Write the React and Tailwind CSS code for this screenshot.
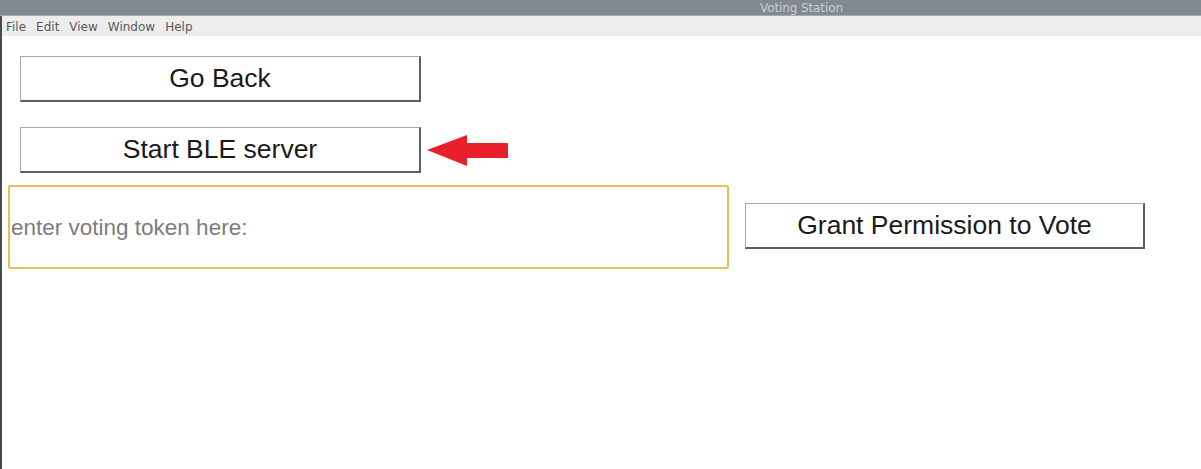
import React from "react";

const Btn = ({ children, className }) => (
    <button
        className={"flex items-center justify-center bg-white text-[26.5px] text-[#1a1a1a] border-t border-l border-b-2 border-r-2 border-t-[#a8a8a8] border-l-[#a8a8a8] border-b-[#5e5e5e] border-r-[#5e5e5e] " + className}
    >
        {children}
    </button>
);

const App = () => {
    return (
        <div className="w-[1201px] h-[469px] bg-white overflow-hidden flex flex-col font-['Liberation_Sans',Arial,sans-serif]">
            {/* title bar */}
            <div className="h-[16px] bg-[#808a90] border-b border-[#a4abb0] flex items-center">
                <span className="pl-[760px] text-[12px] leading-none text-[#c9ced2] font-['DejaVu_Sans',sans-serif] tracking-[-0.1px]">Voting Station</span>
            </div>

            <div className="flex-1 flex flex-col border-l-2 border-[#4a4a4a]">
                {/* menu */}
                <div className="h-[20px] bg-[#ededed] flex items-center gap-[10px] pl-[4px] pt-[1px] text-[12px] text-[#5a5a5a] font-['DejaVu_Sans',sans-serif]">
                    <span>File</span>
                    <span>Edit</span>
                    <span>View</span>
                    <span>Window</span>
                    <span>Help</span>
                </div>

                <div className="flex flex-col">
                    <Btn className="ml-[18px] mt-[20px] w-[401px] h-[46px]">Go Back</Btn>

                    <div className="flex items-center mt-[25px]">
                        <Btn className="ml-[18px] w-[401px] h-[46px]">Start BLE server</Btn>
                        <svg width="84" height="32" viewBox="0 0 84 32" className="ml-[6px] mt-[2px]">
                            <polygon points="0,15 40,0 40,8 81,8 81,23 40,23 40,31" fill="#e8202a" />
                        </svg>
                    </div>

                    <div className="flex items-center mt-[12px]">
                        <div className="ml-[6px] w-[721px] h-[84px] border-2 border-[#e9bd5c] rounded-[2px] flex items-center pl-[1px] pt-[1px]">
                            <span className="text-[22.5px] text-[#7c7c7c]">enter voting token here:</span>
                        </div>
                        <Btn className="ml-[16px] w-[400px] h-[46px] -mt-[2px]">Grant Permission to Vote</Btn>
                    </div>
                </div>
            </div>
        </div>
    );
};

export default App;
